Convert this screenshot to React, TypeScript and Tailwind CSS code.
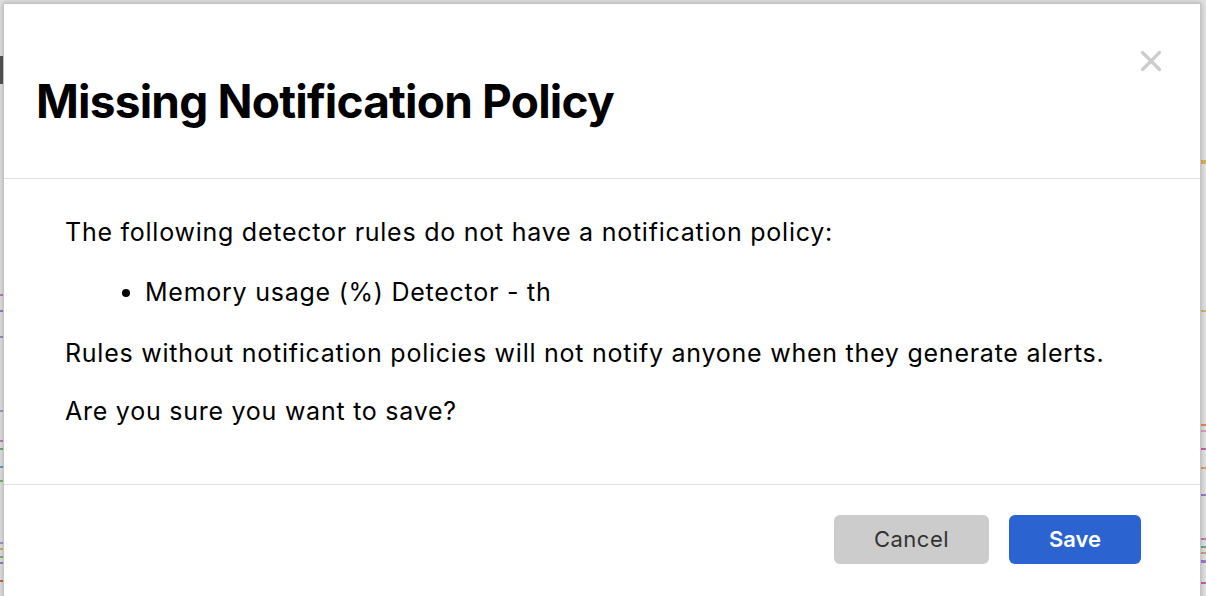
import { X } from 'lucide-react';

// background chart ticks peeking out behind the modal
const leftTicks = [
  { top: 56, color: '#555555', h: 28 },
  { top: 294, color: '#c47bb0', h: 2 },
  { top: 310, color: '#9a7ad6', h: 2 },
  { top: 336, color: '#9a8fb5', h: 2 },
  { top: 410, color: '#9a9ad6', h: 2 },
  { top: 440, color: '#c47bb0', h: 2 },
  { top: 448, color: '#6aaa7a', h: 2 },
  { top: 466, color: '#6a9ad6', h: 2 },
  { top: 480, color: '#7ab86a', h: 2 },
  { top: 542, color: '#9a9ad6', h: 2 },
  { top: 548, color: '#d6b06a', h: 2 },
  { top: 556, color: '#7ab86a', h: 2 },
  { top: 562, color: '#9a7ad6', h: 2 },
  { top: 580, color: '#c0703a', h: 2 },
];

const rightTicks = [
  { top: 160, color: '#e0b060', h: 4 },
  { top: 310, color: '#e0b060', h: 2 },
  { top: 424, color: '#e08a4a', h: 2 },
  { top: 430, color: '#e0a0c0', h: 2 },
  { top: 448, color: '#d060a0', h: 2 },
  { top: 467, color: '#e0a060', h: 2 },
  { top: 494, color: '#9a7ad6', h: 2 },
  { top: 538, color: '#c47bb0', h: 2 },
  { top: 546, color: '#6aaa7a', h: 2 },
  { top: 552, color: '#d6a06a', h: 2 },
  { top: 560, color: '#9a7ad6', h: 3 },
  { top: 582, color: '#d060a0', h: 2 },
];

export default function App() {
  return (
    <div
      className="relative h-[596px] w-[1206px] overflow-hidden bg-[#e2e2e2] pl-[3px] pt-[3px]"
      style={{ fontFamily: 'Inter, "Liberation Sans", Arial, sans-serif' }}
    >
      {/* stuff behind the dialog */}
      {leftTicks.map((t, i) => (
        <div
          key={`l-${i}`}
          className="absolute left-0 w-[3px]"
          style={{ top: t.top, height: t.h, backgroundColor: t.color }}
        />
      ))}
      {rightTicks.map((t, i) => (
        <div
          key={`r-${i}`}
          className="absolute right-0 w-[5px]"
          style={{ top: t.top, height: t.h, backgroundColor: t.color }}
        />
      ))}

      {/* 弹窗 */}
      <div className="relative flex h-[600px] w-[1198px] flex-col border border-[#c4c4c4] bg-white shadow-[0_0_6px_rgba(0,0,0,0.25)]">
        <button className="absolute right-[32px] top-[40px] text-[#cccccc]">
          <X size={34} strokeWidth={2.3} />
        </button>

        <div className="h-[175px] border-b border-[#e1e1e1] pl-[32px] pt-[74px]">
          <h1 className="text-[46px] font-bold leading-none tracking-[-0.8px] text-black">
            Missing Notification Policy
          </h1>
        </div>

        <div className="h-[306px] border-b border-[#e1e1e1] px-[61px] pt-[39px] text-[25px] leading-[28px] tracking-[0.75px] text-black">
          <p>The following detector rules do not have a notification policy:</p>
          <ul className="mt-[32px] list-disc pl-[80px]">
            <li>Memory usage (%) Detector - th</li>
          </ul>
          <p className="mt-[33px]">
            Rules without notification policies will not notify anyone when they generate alerts.
          </p>
          <p className="mt-[30px]">Are you sure you want to save?</p>
        </div>

        <div className="flex justify-end gap-[20px] pr-[59px] pt-[30px]">
          <button className="h-[49px] w-[155px] rounded-[6px] bg-[#cccccc] text-[22px] tracking-[0.5px] text-[#333333]">
            Cancel
          </button>
          <button className="h-[49px] w-[132px] rounded-[6px] bg-[#2b64d1] text-[22px] font-semibold text-white">
            Save
          </button>
        </div>
      </div>
    </div>
  );
}
